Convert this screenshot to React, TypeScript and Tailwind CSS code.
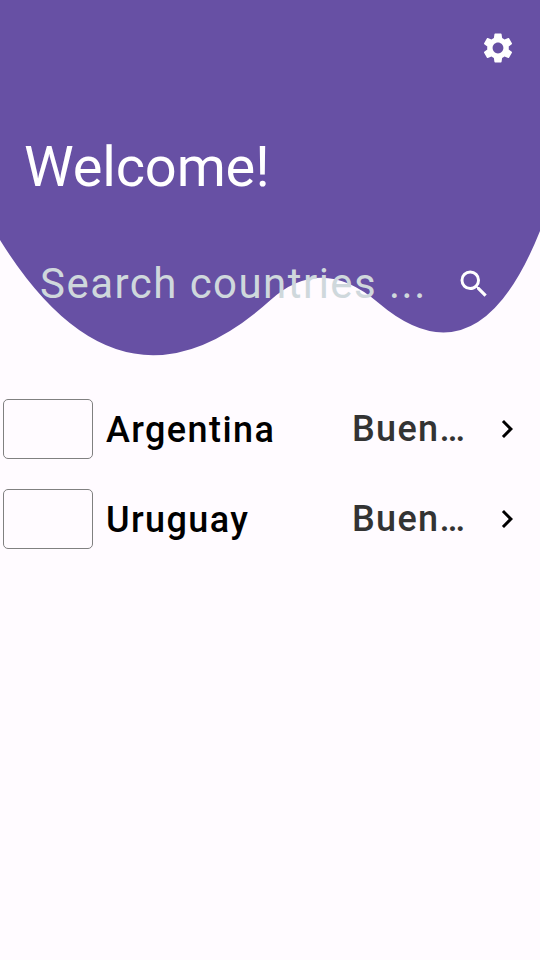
import React from "react";
import { MdSettings, MdSearch, MdChevronRight } from "react-icons/md";

const countries = [
  { name: "Argentina", capital: "Buen…" },
  { name: "Uruguay", capital: "Buen…" },
];

function Header() {
  return (
    <header className="relative h-[384px] text-white">
      <svg className="absolute inset-0" width="540" height="384" viewBox="0 0 540 384" aria-hidden="true">
        <path
          d="M0 0H540V231Q477.5 387.5 378 302.5Q321 254 270 300.5Q121 434.5 0 240Z"
          fill="#6750A4"
        />
      </svg>
      <div className="relative flex flex-col">
        <div className="flex h-24 items-center justify-end pr-6">
          <button aria-label="Settings">
            <MdSettings size={36} />
          </button>
        </div>
        <h1 className="mt-[35px] pl-6 text-[56px] leading-[72px] font-normal tracking-[-0.15px]">Welcome!</h1>
        <div className="mt-[45px] flex h-[72px] items-center justify-between pr-12 pl-10">
          <span className="text-[42px] leading-[72px] tracking-[1.46px] whitespace-nowrap text-[#CFD8DC]">
            Search countries ...
          </span>
          <MdSearch size={36} className="-mt-px" />
        </div>
      </div>
    </header>
  );
}

function CountryRow({ name, capital }: { name: string; capital: string }) {
  return (
    <li className="flex h-[90px] items-center pr-[15px] pl-[3px]">
      <div className="h-[60px] w-[90px] shrink-0 rounded-[5px] border-[1.5px] border-[#808080]" />
      <span className="ml-[13px] w-[246px] pt-px text-[36px] leading-[60px] font-medium tracking-[1.4px] text-black">
        {name}
      </span>
      <span className="w-[118px] text-[36px] leading-[60px] font-medium tracking-[1.35px] whitespace-nowrap text-[#333333]">
        {capital}
      </span>
      <MdChevronRight className="ml-auto shrink-0 text-black" size={36} />
    </li>
  );
}

export default function App() {
  return (
    <main className="h-[960px] w-[540px] overflow-hidden bg-[#FFFBFF] font-[Roboto,sans-serif]">
      <Header />
      <ul>
        {countries.map((c) => (
          <CountryRow key={c.name} {...c} />
        ))}
      </ul>
    </main>
  );
}
